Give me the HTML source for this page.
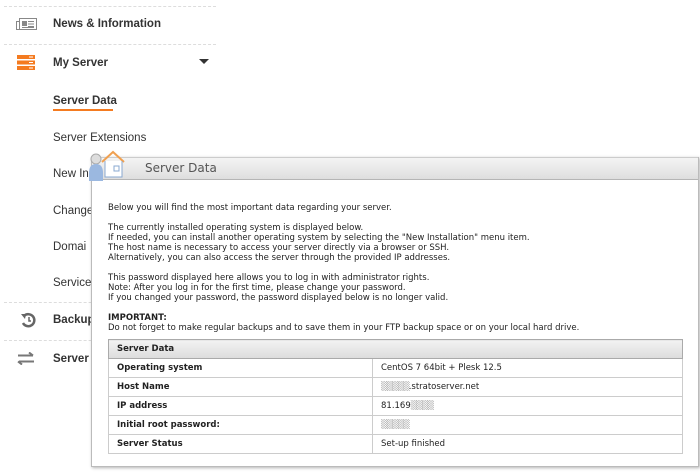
<!DOCTYPE html><html><head><style>
body{margin:0;width:700px;height:472px;background:#fff;position:relative;overflow:hidden;font-family:"DejaVu Sans",Verdana,sans-serif}
.sb{position:absolute;left:0;top:0;width:220px;font-family:"Liberation Sans",sans-serif;font-size:11.5px;color:#333}
.dl{position:absolute;left:4px;width:212px;border-top:1px dashed #ddd}
.it{position:absolute;left:53px;white-space:nowrap}
.b{font-weight:bold}
.win{position:absolute;left:91px;top:157px;width:606px;height:309px;border:1px solid #bbb;border-top:none;background:#fff;box-shadow:1px 1px 3px rgba(0,0,0,.3)}
.tb{position:absolute;left:0;top:0;right:0;height:21px;background:linear-gradient(#f4f4f4,#dedede);border-top:1px solid #ccc;border-bottom:1px solid #b5b5b5}
.tb span{position:absolute;left:53px;top:3px;font-size:12px;color:#555}
.tx{position:absolute;left:16px;top:46px;font-size:8.5px;line-height:10px;color:#222;white-space:nowrap}
table{position:absolute;left:16px;top:182px;width:575px;border-collapse:collapse;font-size:8.5px;color:#222}
td{border:1px solid #ccc;height:19px;padding:0 8px;box-sizing:border-box}
td:first-child{font-weight:bold;width:264px}
th{text-align:left;height:18px;padding:0 8px;background:linear-gradient(#f2f2f2,#dcdcdc);border:1px solid #aaa}
.bl{color:#bbb;letter-spacing:-1px}
</style></head><body>
<div class="sb">
<div class="dl" style="top:6px"></div>
<div class="dl" style="top:44px"></div>
<div class="dl" style="top:302px"></div>
<div class="dl" style="top:340px"></div>
<svg style="position:absolute;left:16px;top:17px" width="22" height="14"><rect x="3.5" y="1.5" width="17" height="11" fill="none" stroke="#888"/><rect x="0.5" y="4.5" width="3" height="8" fill="none" stroke="#888"/><rect x="6" y="4" width="5" height="5" fill="#888"/><path d="M12 4.5h6M12 7h6M12 9.5h6M6 10.5h12" stroke="#888"/></svg>
<div class="it b" style="top:18px">News &amp; Information</div>
<svg style="position:absolute;left:17px;top:55px" width="18" height="15"><rect x="0" y="0" width="18" height="4" fill="#f47b20"/><rect x="0" y="5.5" width="18" height="4" fill="#f47b20"/><rect x="0" y="11" width="18" height="4" fill="#f47b20"/><path d="M12 2h4M12 7.5h4M12 13h4" stroke="#fff"/></svg>
<div class="it b" style="top:57px">My Server</div>
<div style="position:absolute;left:199px;top:59px;border:5px solid transparent;border-top:5px solid #333;border-bottom:none"></div>
<div class="it b" style="top:95px">Server Data</div>
<div style="position:absolute;left:53px;top:109px;width:60px;height:2px;background:#f47b20"></div>
<div class="it" style="top:132px">Server Extensions</div>
<div class="it" style="top:168px">New In</div>
<div class="it" style="top:205px">Change</div>
<div class="it" style="top:241px">Domai</div>
<div class="it" style="top:277px">Service</div>
<svg style="position:absolute;left:20px;top:312px" width="16" height="16"><path d="M4 4A6 6 0 1 1 3 11" fill="none" stroke="#666" stroke-width="2.5"/><path d="M1 2l5 0-1 5z" fill="#666"/><path d="M9 5v4h2" stroke="#666" stroke-width="1.5" fill="none"/></svg>
<div class="it b" style="top:314px">Backup</div>
<svg style="position:absolute;left:17px;top:352px" width="18" height="13"><path d="M1 3.5h15M12 0.5l4 3M17 9.5H2M5 12.5l-4-3" stroke="#777" stroke-width="2" fill="none"/></svg>
<div class="it b" style="top:353px">Server</div>
</div>
<div class="win">
<div class="tb"><span>Server Data</span></div>
<div class="tx">Below you will find the most important data regarding your server.<br><br>The currently installed operating system is displayed below.<br>If needed, you can install another operating system by selecting the "New Installation" menu item.<br>The host name is necessary to access your server directly via a browser or SSH.<br>Alternatively, you can also access the server through the provided IP addresses.<br><br>This password displayed here allows you to log in with administrator rights.<br>Note: After you log in for the first time, please change your password.<br>If you changed your password, the password displayed below is no longer valid.<br><br><b>IMPORTANT:</b><br>Do not forget to make regular backups and to save them in your FTP backup space or on your local hard drive.</div>
<table>
<tr><th colspan="2">Server Data</th></tr>
<tr><td>Operating system</td><td>CentOS 7 64bit + Plesk 12.5</td></tr>
<tr><td>Host Name</td><td><span class="bl">▒▒▒▒▒</span>.stratoserver.net</td></tr>
<tr><td>IP address</td><td>81.169<span class="bl">▒▒▒▒</span></td></tr>
<tr><td>Initial root password:</td><td><span class="bl">▒▒▒▒▒</span></td></tr>
<tr><td>Server Status</td><td>Set-up finished</td></tr>
</table>
</div>
<svg style="position:absolute;left:88px;top:149px" width="40" height="36"><path d="M14 13l11-10 11 10" fill="none" stroke="#f0a050" stroke-width="2"/><path d="M17 12v16h17V12" fill="#fff" stroke="#8aa8d0"/><rect x="26" y="17" width="5" height="5" fill="none" stroke="#8aa8d0"/><circle cx="8" cy="10" r="5" fill="#ddd" stroke="#aaa"/><path d="M1 24q0-9 7-9q7 0 7 9v8H1z" fill="#9bb8e0"/></svg>
</body></html>
